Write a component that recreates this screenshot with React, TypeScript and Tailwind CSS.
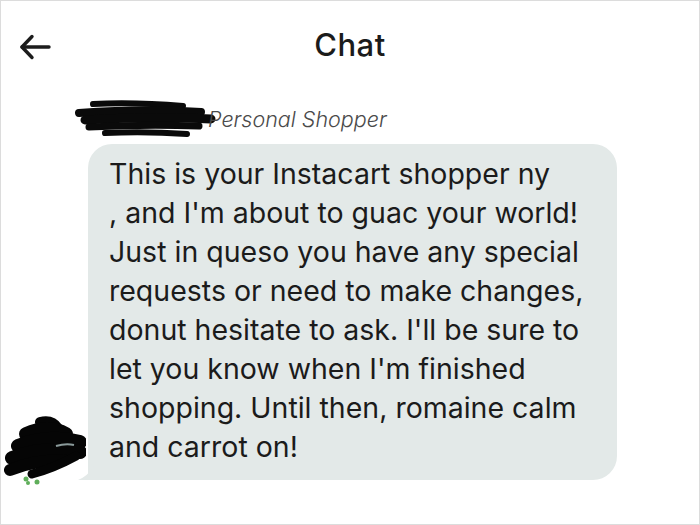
const lines = [
  'This is your Instacart shopper ny',
  ", and I'm about to guac your world!",
  'Just in queso you have any special',
  'requests or need to make changes,',
  "donut hesitate to ask. I'll be sure to",
  "let you know when I'm finished",
  'shopping. Until then, romaine calm',
  'and carrot on!',
]

function BackArrow() {
  return (
    <svg width="32" height="26" viewBox="0 0 32 26" className="absolute left-[18px] top-[15px]">
      <g stroke="#1c1c1c" strokeWidth="3.4" strokeLinecap="round" strokeLinejoin="round" fill="none">
        <path d="M3 13 H30" />
        <path d="M13 2.5 L3 13 L13 23.5" />
      </g>
    </svg>
  )
}

function NameScribble() {
  return (
    <svg width="142" height="40" viewBox="0 0 142 40" className="shrink-0">
      <g stroke="#0a0a0a" strokeLinecap="round" fill="none">
        <path d="M18 5 Q60 3 108 7" strokeWidth="6" />
        <path d="M4 14 Q70 9 126 13" strokeWidth="8" />
        <path d="M10 21 Q80 17 136 20" strokeWidth="9" />
        <path d="M14 28 Q70 25 124 27" strokeWidth="7" />
        <path d="M30 34 Q70 32 112 35" strokeWidth="6" />
      </g>
    </svg>
  )
}

function AvatarScribble() {
  return (
    <svg width="82" height="70" viewBox="0 0 82 70">
      <g stroke="#050505" strokeLinecap="round" fill="none">
        <path d="M36 6 Q48 3 54 12" strokeWidth="10" />
        <path d="M22 18 Q44 8 62 18" strokeWidth="14" />
        <path d="M14 30 Q44 18 76 26" strokeWidth="14" />
        <path d="M8 42 Q40 30 76 36" strokeWidth="14" />
        <path d="M6 54 Q30 44 60 44" strokeWidth="12" />
        <path d="M28 58 Q50 52 72 40" strokeWidth="9" />
      </g>
      <path d="M52 30 Q62 27 70 29" stroke="#8a9a9a" strokeWidth="2" fill="none" />
      <circle cx="22" cy="63" r="2.5" fill="#5fae5a" />
      <circle cx="33" cy="66" r="2.5" fill="#5fae5a" />
      <circle cx="24" cy="67" r="2" fill="#5fae5a" />
    </svg>
  )
}

export default function App() {
  return (
    <div
      className="w-[700px] h-[525px] bg-white border border-[#dcdcdc] overflow-hidden text-[#1b1b1b]"
      style={{ fontFamily: 'Inter, Roboto, "Liberation Sans", sans-serif' }}
    >
      {/* header */}
      <div className="relative flex items-center justify-center h-[56px] mt-[18px]">
        <BackArrow />
        <h1 className="text-[31px] font-medium tracking-[0.5px] -mt-[3px]">Chat</h1>
      </div>

      {/* sender */}
      <div className="flex items-center pl-[74px] mt-[24px] h-[40px]">
        <NameScribble />
        <span className="-ml-[9px] text-[21.5px] italic font-light text-[#4a4a4a]">Personal Shopper</span>
      </div>

      {/* message */}
      <div className="flex items-end mt-[5px]">
        <div className="w-[87px] shrink-0 flex justify-start pl-[3px] -mb-[6px]">
          <AvatarScribble />
        </div>
        <div className="relative">
          <div className="w-[529px] bg-[#e3e9e8] rounded-[24px] rounded-bl-[6px] pl-[21px] pr-[16px] pt-[10px] pb-[14px]">
            {lines.map((l, i) => (
              <p key={i} className="text-[28.5px] leading-[39px] whitespace-nowrap">{l}</p>
            ))}
          </div>
          <svg className="absolute -left-[10px] bottom-0" width="16" height="14" viewBox="0 0 16 14">
            <path d="M16 0 L16 14 L0 14 Q10 10 16 0 Z" fill="#e3e9e8" />
          </svg>
        </div>
      </div>
    </div>
  )
}
